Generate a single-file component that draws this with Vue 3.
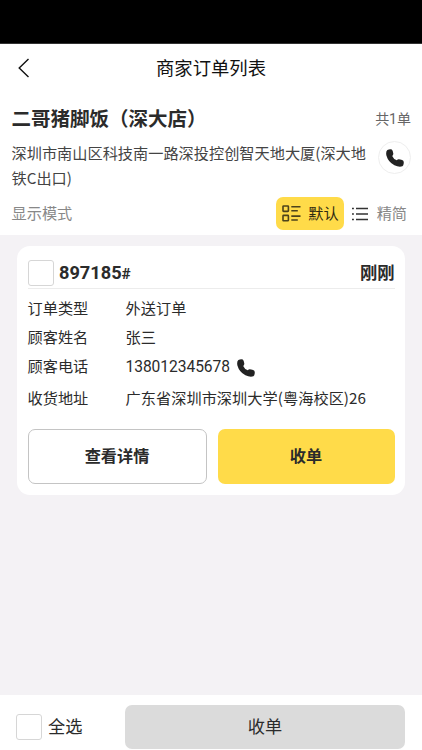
<script setup>
import { ref } from 'vue'

const phonePath =
  'M1.4 .9 Q3.8 -.2 5.8 .5 Q6.9 1.5 7.3 4.6 Q7.4 6 6.2 6.9 Q7.4 9.8 10.8 11.3 Q11.5 10.2 12.8 10.2 Q15.8 10.4 17.1 11.4 Q18 12.4 17.7 14.6 Q17.5 16.5 16.4 17.3 Q13 18.4 8.4 16.3 Q2.2 12.8 .4 6.4 Q-.4 2.3 1.4 .9 Z'

const picked = ref(false)
const allPicked = ref(false)

const fields = [
  { label: '订单类型', value: '外送订单' },
  { label: '顾客姓名', value: '张三' },
  { label: '顾客电话', value: '138012345678', phone: true },
  { label: '收货地址', value: '广东省深圳市深圳大学(粤海校区)26' },
]
</script>

<template>
  <div class="page">
    <div class="status"></div>
    <header class="nav">
      <svg class="back" width="12" height="20" viewBox="0 0 12 20">
        <path d="M10.5 1 L1.2 10 L10.5 19" fill="none" stroke="#111" stroke-width="1.4" />
      </svg>
      <h1>商家订单列表</h1>
    </header>

    <section class="store">
      <div class="store-top">
        <h2>二哥猪脚饭（深大店）</h2>
        <span class="count">共1单</span>
      </div>
      <div class="store-addr">
        <p>深圳市南山区科技南一路深投控创智天地大厦(深大地铁C出口)</p>
        <button class="call">
          <svg width="18" height="18" viewBox="0 0 18 18"><path :d="phonePath" fill="#222" /></svg>
        </button>
      </div>
      <div class="mode">
        <span class="mode-label">显示模式</span>
        <button class="mode-default">
          <svg width="19" height="17" viewBox="0 0 19 17" fill="none" stroke="#4d431b" stroke-width="1.6">
            <rect x="1" y="1" width="5.4" height="5.4" rx=".6" />
            <rect x="1" y="10.4" width="5.4" height="5.4" rx=".6" />
            <path d="M9.3 1.8H18.5M9.3 5.8H15.8M9.3 11.1H18.5M9.3 15H15.8" />
          </svg>
          <span>默认</span>
        </button>
        <button class="mode-simple">
          <svg width="16" height="14" viewBox="0 0 16 14" stroke="#333" stroke-width="1.5">
            <path d="M0 1.4H1.9M0 7H1.9M0 12.6H1.9M4 1.4H16M4 7H16M4 12.6H16" />
          </svg>
          <span>精简</span>
        </button>
      </div>
    </section>

    <main class="list">
      <article class="card">
        <div class="card-head">
          <span class="box" @click="picked = !picked"></span>
          <strong class="no">897185<small>#</small></strong>
          <strong class="time">刚刚</strong>
        </div>
        <dl>
          <div v-for="f in fields" :key="f.label" class="row">
            <dt>{{ f.label }}</dt>
            <dd :class="{ tel: f.phone }">
              <span>{{ f.value }}</span>
              <svg v-if="f.phone" width="18" height="18" viewBox="0 0 18 18"><path :d="phonePath" fill="#222" /></svg>
            </dd>
          </div>
        </dl>
        <div class="actions">
          <button class="detail">查看详情</button>
          <button class="accept">收单</button>
        </div>
      </article>
    </main>

    <footer class="bar">
      <span class="box" @click="allPicked = !allPicked"></span>
      <span class="all">全选</span>
      <button class="submit">收单</button>
    </footer>
  </div>
</template>

<style>
body {
  margin: 0;
  overflow: hidden;
}
</style>

<style scoped>
* {
  box-sizing: border-box;
}
.page {
  width: 422px;
  height: 750px;
  display: flex;
  flex-direction: column;
  background: #f4f2f5;
  color: #2b2b2b;
  font-family: 'Noto Sans CJK SC', sans-serif;
  font-size: 15.2px;
}
h1, h2, p, dl, dd {
  margin: 0;
}
button {
  border: 0;
  padding: 0;
  background: none;
  color: inherit;
  font: inherit;
  white-space: nowrap;
}
svg {
  display: block;
  flex: none;
}
.status {
  height: 44px;
  flex: none;
  background: #000;
  border-bottom: 1px solid #333;
}
.nav {
  height: 48px;
  flex: none;
  background: #fff;
  display: grid;
  grid-template-columns: 40px 1fr 40px;
  align-items: center;
}
.back {
  margin-left: 18px;
}
h1 {
  text-align: center;
  font-size: 18.35px;
  line-height: 26px;
  padding-bottom: 2px;
  font-weight: 400;
  color: #111;
}
.store {
  height: 143px;
  flex: none;
  background: #fff;
  padding: 12px 11px 0 11.5px;
}
.store-top {
  display: flex;
  justify-content: space-between;
  align-items: center;
  height: 28px;
}
h2 {
  font-size: 19.5px;
  line-height: 28px;
  font-weight: 700;
  white-space: nowrap;
}
.count {
  font-family: Roboto, 'Noto Sans CJK SC', sans-serif;
  font-size: 14px;
  color: #666;
}
.store-addr {
  display: flex;
  justify-content: space-between;
  height: 65px;
  padding-top: 8px;
  color: #444;
}
.store-addr p {
  width: 362px;
  line-height: 25px;
}
.call {
  width: 33px;
  height: 33px;
  flex: none;
  margin-top: 1px;
  border: 1px solid #eee;
  border-radius: 50%;
  display: grid;
  place-items: center;
}
.mode {
  display: flex;
  height: 33px;
  align-items: center;
  color: #888;
}
.mode span {
  padding-bottom: 4px;
}
.mode-label {
  margin-right: auto;
}
.mode-default {
  width: 68px;
  height: 33px;
  border-radius: 7px;
  background: #ffdb49;
  color: #302a12;
  display: flex;
  align-items: center;
  justify-content: space-between;
  padding: 0 5px 0 6px;
}
.mode-simple {
  display: flex;
  align-items: center;
  gap: 9px;
  margin: 0 4px 0 8px;
}
.list {
  flex: 1;
  padding: 11px 17px;
}
.card {
  height: 249px;
  background: #fff;
  border-radius: 13px;
  padding: 11px 10.5px 0 10.5px;
}
.card-head {
  display: flex;
  align-items: center;
  height: 32px;
  border-bottom: 1px solid #ececec;
}
.box {
  width: 26px;
  height: 26px;
  flex: none;
  border: 1px solid #d6d6d6;
  border-radius: 3px;
}
.no {
  font-family: Roboto, 'Noto Sans CJK SC', sans-serif;
  font-size: 18.2px;
  line-height: 26px;
  margin-left: 5.5px;
  padding-top: 1px;
}
.no small {
  font-size: 15.5px;
}
.time {
  margin-left: auto;
  font-size: 17.3px;
  line-height: 26px;
  padding-bottom: 2px;
}
dl {
  padding-top: 5px;
}
.row {
  display: flex;
  align-items: center;
  height: 29px;
}
.row:last-child {
  height: 35px;
}
dt {
  width: 98px;
  padding-bottom: 4px;
}
dd {
  white-space: nowrap;
  letter-spacing: 0.04px;
  padding-bottom: 4px;
}
.tel {
  display: flex;
  align-items: center;
  gap: 7px;
  font-family: Roboto, sans-serif;
  font-size: 15.6px;
  padding-bottom: 0;
}
.tel span {
  letter-spacing: -0.06px;
}
.tel svg {
  margin-top: 3px;
}
.actions {
  display: grid;
  grid-template-columns: 179px 177px;
  justify-content: space-between;
  height: 55px;
  margin-top: 13px;
  font-size: 16.2px;
  font-weight: 700;
}
.actions button {
  padding-bottom: 3px;
}
.detail {
  border: 1px solid #c4c4c4;
  border-radius: 7px;
}
.accept {
  border-radius: 7px;
  background: #ffdb49;
}
.bar {
  height: 55px;
  flex: none;
  background: #fff;
  display: flex;
  align-items: center;
  padding: 8px 17px 0 16px;
  font-size: 17.2px;
}
.all {
  margin-left: 6px;
  padding-bottom: 2px;
}
.submit {
  width: 280px;
  height: 44px;
  margin: 0 0 0 auto;
  padding-bottom: 2px;
  border-radius: 7px;
  background: #dbdbdb;
}
</style>
